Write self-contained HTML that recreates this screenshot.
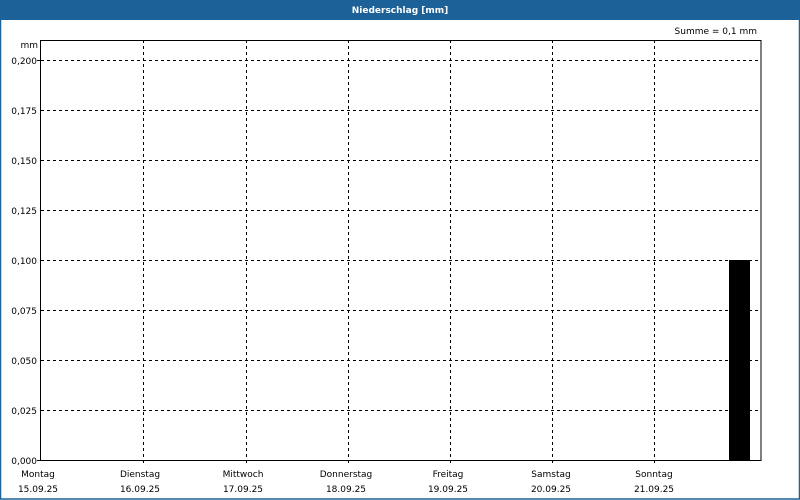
<!DOCTYPE html>
<html><head><style>
html,body{margin:0;padding:0;background:#fff;}
svg{display:block}
text{font-family:"DejaVu Sans","Liberation Sans",sans-serif;font-size:9px;fill:#000}
</style></head><body>
<svg width="800" height="500" xmlns="http://www.w3.org/2000/svg">
<rect x="0" y="0" width="800" height="500" fill="#fff"/>
<rect x="0.5" y="0.5" width="799" height="498.5" fill="none" stroke="#1c6298" stroke-width="1.5"/>
<rect x="0" y="0" width="800" height="20" fill="#1c6298"/>
<text x="400" y="13" text-anchor="middle" style="fill:#fff;font-weight:bold;font-size:9px">Niederschlag [mm]</text>
<text x="757" y="34" text-anchor="end">Summe = 0,1 mm</text>
<text x="38" y="48" text-anchor="end">mm</text>
<g stroke="#000" stroke-dasharray="3,3" stroke-width="1">
<line x1="41" y1="60.5" x2="761" y2="60.5"/>
<line x1="41" y1="110.5" x2="761" y2="110.5"/>
<line x1="41" y1="160.5" x2="761" y2="160.5"/>
<line x1="41" y1="210.5" x2="761" y2="210.5"/>
<line x1="41" y1="260.5" x2="761" y2="260.5"/>
<line x1="41" y1="310.5" x2="761" y2="310.5"/>
<line x1="41" y1="360.5" x2="761" y2="360.5"/>
<line x1="41" y1="410.5" x2="761" y2="410.5"/>
<line x1="143.5" y1="40" x2="143.5" y2="466"/>
<line x1="246.5" y1="40" x2="246.5" y2="466"/>
<line x1="348.5" y1="40" x2="348.5" y2="466"/>
<line x1="450.5" y1="40" x2="450.5" y2="466"/>
<line x1="552.5" y1="40" x2="552.5" y2="466"/>
<line x1="654.5" y1="40" x2="654.5" y2="466"/>
</g>
<rect x="729" y="260" width="21" height="200" fill="#000"/>
<rect x="40.5" y="40.5" width="720.5" height="420" fill="none" stroke="#000" stroke-width="1"/>
<g stroke="#000"><line x1="37" y1="60.5" x2="41" y2="60.5"/><line x1="37" y1="460.5" x2="41" y2="460.5"/></g>
<g text-anchor="end">
<text x="37" y="64">0,200</text><text x="37" y="114">0,175</text><text x="37" y="164">0,150</text>
<text x="37" y="214">0,125</text><text x="37" y="264">0,100</text><text x="37" y="314">0,075</text>
<text x="37" y="364">0,050</text><text x="37" y="414">0,025</text><text x="37" y="464">0,000</text>
</g>
<g text-anchor="middle">
<text x="38" y="477">Montag</text><text x="38" y="492">15.09.25</text>
<text x="140" y="477">Dienstag</text><text x="140" y="492">16.09.25</text>
<text x="243" y="477">Mittwoch</text><text x="243" y="492">17.09.25</text>
<text x="346" y="477">Donnerstag</text><text x="346" y="492">18.09.25</text>
<text x="448" y="477">Freitag</text><text x="448" y="492">19.09.25</text>
<text x="551" y="477">Samstag</text><text x="551" y="492">20.09.25</text>
<text x="654" y="477">Sonntag</text><text x="654" y="492">21.09.25</text>
</g>
</svg>
</body></html>
